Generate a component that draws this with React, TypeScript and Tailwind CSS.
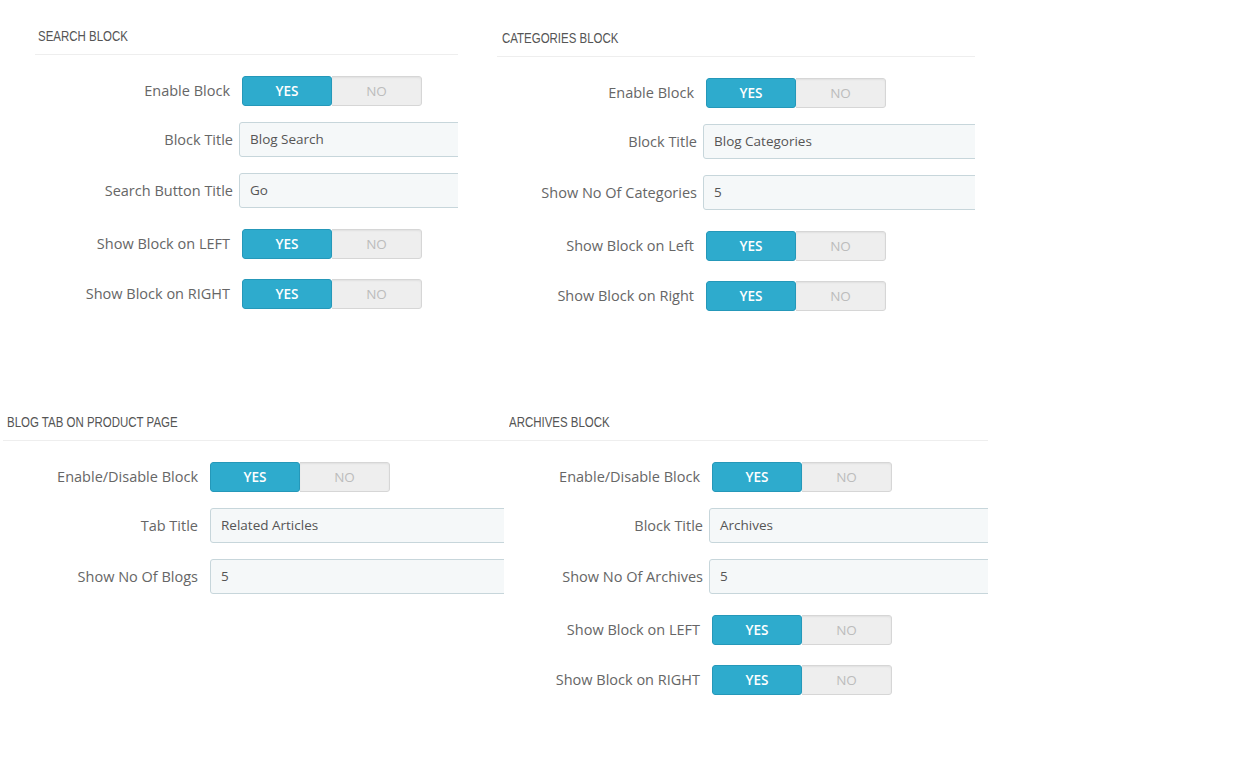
import React from "react"

type Field = { label: string; kind: "toggle" | "input"; value?: string }

type PanelProps = {
  title: string
  fields: Field[]
  className: string
  titleInset: string
  labelWidth: string
  inputLabelPad: string
  toggleLabelPad: string
  toggleOffset: string
}

function Switch() {
  return (
    <div className="flex h-[30px] w-[180px] shrink-0 overflow-hidden rounded-[3px] text-[13.5px]">
      <span className="flex w-1/2 items-center justify-center rounded-[3px] border border-[#2598b9] bg-[#2eabcd] font-semibold text-white">
        YES
      </span>
      <span className="flex w-1/2 items-center justify-center rounded-r-[3px] border border-l-0 border-[#d6d6d6] bg-[#eeeeee] text-[#bcbcbc] shadow-[inset_0_1px_2px_rgba(0,0,0,0.06)]">
        NO
      </span>
    </div>
  )
}

function TextBox({ value }: { value?: string }) {
  return (
    <div className="flex h-[35px] w-[520px] shrink-0 items-center rounded-[3px] border border-[#c7d6db] bg-[#f5f8f9] pl-[10px] text-[13.5px] text-[#555]">
      {value}
    </div>
  )
}

function Panel({ title, fields, className, titleInset, labelWidth, inputLabelPad, toggleLabelPad, toggleOffset }: PanelProps) {
  return (
    <section className={`overflow-hidden ${className}`}>
      <h3 className={`box-content h-[20px] border-b border-[#eeeeee] pb-[8px] whitespace-nowrap ${titleInset}`}>
        {/* condensed heading face: Arial metrics squeezed horizontally */}
        <span
          className="block origin-left scale-x-[0.74] text-[15.5px] leading-[20px] text-[#555] uppercase"
          style={{ fontFamily: '"Liberation Sans", Arial, sans-serif' }}
        >
          {title}
        </span>
      </h3>
      {fields.map((f, i) => {
        const prev = i > 0 ? fields[i - 1].kind : null
        let gap = "mt-[21px]"
        if (f.kind === "input") gap = "mt-[16px]"
        else if (prev === "toggle") gap = "mt-[20px]"
        return (
          <div key={f.label} className={`flex items-center ${gap}`}>
            <label
              className={`shrink-0 text-right text-[14.5px] text-[#666] ${labelWidth} ${
                f.kind === "toggle" ? toggleLabelPad : inputLabelPad
              }`}
            >
              {f.label}
            </label>
            {f.kind === "toggle" ? (
              <div className={toggleOffset}>
                <Switch />
              </div>
            ) : (
              <TextBox value={f.value} />
            )}
          </div>
        )
      })}
    </section>
  )
}

const searchFields: Field[] = [
  { label: "Enable Block", kind: "toggle" },
  { label: "Block Title", kind: "input", value: "Blog Search" },
  { label: "Search Button Title", kind: "input", value: "Go" },
  { label: "Show Block on LEFT", kind: "toggle" },
  { label: "Show Block on RIGHT", kind: "toggle" },
]

const categoryFields: Field[] = [
  { label: "Enable Block", kind: "toggle" },
  { label: "Block Title", kind: "input", value: "Blog Categories" },
  { label: "Show No Of Categories", kind: "input", value: "5" },
  { label: "Show Block on Left", kind: "toggle" },
  { label: "Show Block on Right", kind: "toggle" },
]

const tabFields: Field[] = [
  { label: "Enable/Disable Block", kind: "toggle" },
  { label: "Tab Title", kind: "input", value: "Related Articles" },
  { label: "Show No Of Blogs", kind: "input", value: "5" },
]

const archiveFields: Field[] = [
  { label: "Enable/Disable Block", kind: "toggle" },
  { label: "Block Title", kind: "input", value: "Archives" },
  { label: "Show No Of Archives", kind: "input", value: "5" },
  { label: "Show Block on LEFT", kind: "toggle" },
  { label: "Show Block on RIGHT", kind: "toggle" },
]

export default function App() {
  return (
    <div className="min-h-screen w-full bg-white pt-[26px]" style={{ fontFamily: '"Open Sans", sans-serif' }}>
      <div className="flex h-[386px] items-start">
        <Panel
          title="Search Block"
          fields={searchFields}
          className="ml-[35px] w-[423px]"
          titleInset="pl-[3px]"
          labelWidth="w-[204px]"
          inputLabelPad="pr-[6px]"
          toggleLabelPad="pr-[9px]"
          toggleOffset="ml-[3px]"
        />
        <Panel
          title="Categories Block"
          fields={categoryFields}
          className="mt-[2px] ml-[39px] w-[478px]"
          titleInset="pl-[5px]"
          labelWidth="w-[206px]"
          inputLabelPad="pr-[6px]"
          toggleLabelPad="pr-[9px]"
          toggleOffset="ml-[3px]"
        />
      </div>
      <div className="flex items-start">
        <Panel
          title="Blog Tab on Product Page"
          fields={tabFields}
          className="ml-[3px] w-[501px]"
          titleInset="pl-[4px]"
          labelWidth="w-[207px]"
          inputLabelPad="pr-[12px]"
          toggleLabelPad="pr-[12px]"
          toggleOffset="ml-0"
        />
        <Panel
          title="Archives Block"
          fields={archiveFields}
          className="w-[484px]"
          titleInset="pl-[5px]"
          labelWidth="w-[205px]"
          inputLabelPad="pr-[6px]"
          toggleLabelPad="pr-[9px]"
          toggleOffset="ml-[3px]"
        />
      </div>
    </div>
  )
}
